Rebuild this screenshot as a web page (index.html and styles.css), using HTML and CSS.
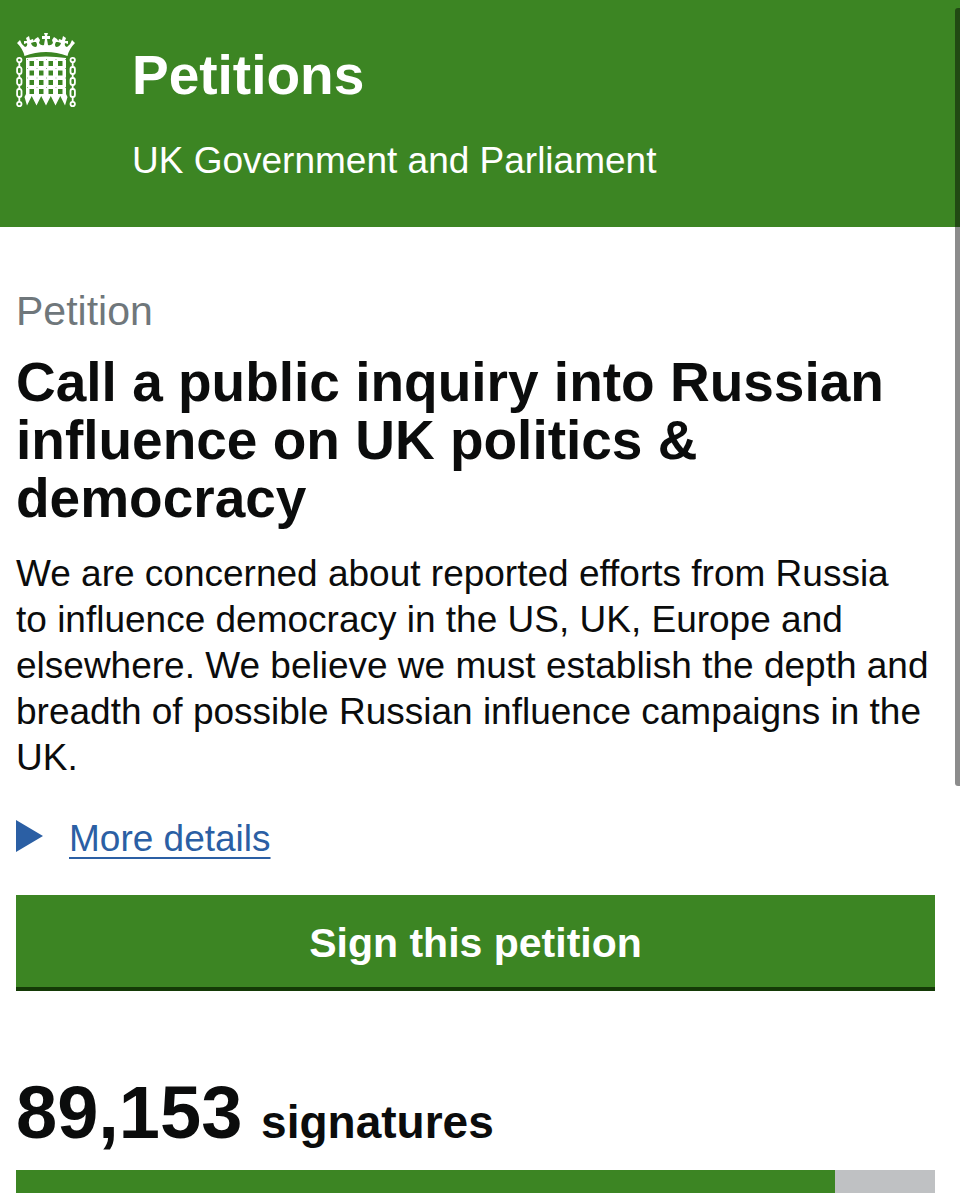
FILE: index.html
```html
<!DOCTYPE html>
<html lang="en">
<head>
  <meta charset="UTF-8">
  <meta name="viewport" content="width=device-width, initial-scale=1">
  <title>Petitions</title>
  <link rel="stylesheet" href="styles.css">
</head>
<body>
  <header class="header">
    <svg class="logo" viewBox="0 0 60 75" aria-hidden="true">
      <!-- crown -->
      <path fill="#fff" d="M8.5 23 Q7 16 1 10 L4 7 Q5 11 9 14 Q12 13 11 10 L8 11 L8 8 L11 8 L10 5 L13 3 L14 7 L17 6 L18 9 L15 10 Q16 14 20 14 Q22 12 20 9 L17 9 L19 6 L22 4 L24 7 L23 10 Q25 13 28 12 L29 6 L26 6 L26 3 L29 3 L28 0 L32 0 L31 3 L34 3 L34 6 L31 6 L32 12 Q35 13 37 10 L36 7 L38 4 L41 6 L43 9 L40 9 Q38 12 40 14 Q44 14 45 10 L42 9 L43 6 L46 7 L47 3 L50 5 L49 8 L52 8 L52 11 L49 10 Q48 13 51 14 Q55 11 56 7 L59 10 Q53 16 51.5 23 Q30 15 8.5 23 Z"/>
      <!-- gate -->
      <path fill="#fff" fill-rule="evenodd" d="M10 25 Q30 22 50 25 V61 L51.5 64 L49 72.5 L44.3 63 L39.5 72.5 L34.8 63 L30 72.5 L25.2 63 L20.5 72.5 L15.7 63 L11 72.5 L8.5 64 L10 61 Z M13.5 28 h4.5 v5 h-4.5z M23 28 h4.5 v5 h-4.5z M32.5 28 h4.5 v5 h-4.5z M42 28 h4.5 v5 h-4.5z M13.5 37.5 h4.5 v5 h-4.5z M23 37.5 h4.5 v5 h-4.5z M32.5 37.5 h4.5 v5 h-4.5z M42 37.5 h4.5 v5 h-4.5z M13.5 47 h4.5 v5 h-4.5z M23 47 h4.5 v5 h-4.5z M32.5 47 h4.5 v5 h-4.5z M42 47 h4.5 v5 h-4.5z M13.5 56 h4.5 v5 h-4.5z M23 56 h4.5 v5 h-4.5z M32.5 56 h4.5 v5 h-4.5z M42 56 h4.5 v5 h-4.5z"/>
      <!-- rivets -->
      <path stroke="#3c8523" stroke-opacity="0.6" stroke-width="1" stroke-dasharray="1 8.5" d="M11 35.5H51 M11 45H51 M11 54.5H51 M11 26.5H51"/>
      <!-- chains -->
      <g fill="none" stroke="#fff" stroke-width="1.8">
        <circle cx="3.3" cy="27" r="2.2"/>
        <rect x="1.1" y="34" width="4.4" height="7" rx="2"/>
        <rect x="1.1" y="45" width="4.4" height="7" rx="2"/>
        <rect x="1.1" y="56" width="4.4" height="8" rx="2"/>
        <circle cx="3.3" cy="71" r="2.2"/>
        <path d="M3.3 29v5 M3.3 41v4 M3.3 52v4 M3.3 64v5"/>
        <circle cx="56.7" cy="27" r="2.2"/>
        <rect x="54.5" y="34" width="4.4" height="7" rx="2"/>
        <rect x="54.5" y="45" width="4.4" height="7" rx="2"/>
        <rect x="54.5" y="56" width="4.4" height="8" rx="2"/>
        <circle cx="56.7" cy="71" r="2.2"/>
        <path d="M56.7 29v5 M56.7 41v4 M56.7 52v4 M56.7 64v5"/>
      </g>
    </svg>
    <div class="header-text">
      <div class="site-title">Petitions</div>
      <div class="site-subtitle">UK Government and Parliament</div>
    </div>
  </header>

  <main class="content">
    <p class="label">Petition</p>
    <h1 class="title">Call a public inquiry into Russian influence on UK politics &amp; democracy</h1>
    <p class="intro">We are concerned about reported efforts from Russia<br> to influence democracy in the US, UK, Europe and elsewhere. We believe we must establish the depth and breadth of possible Russian influence campaigns in the UK.</p>

    <details class="details">
      <summary><span>More details</span></summary>
    </details>

    <button class="sign-button" type="button">Sign this petition</button>

    <p class="count"><span class="count-number">89,153</span> signatures</p>
    <div class="progress">
      <div class="progress-bar" style="width: 89.1%"></div>
    </div>
  </main>

  <div class="scroll-thumb"></div>
</body>
</html>
```

FILE: styles.css
```css
body {
  margin: 0;
  position: relative;
  background: #fff;
  color: #0b0c0c;
  font-family: "Liberation Sans", Arial, sans-serif;
  font-size: 37px;
  line-height: 46px;
}
.header {
  display: flex;
  gap: 56px;
  padding: 33px 16px 43px;
  background: #3c8523;
  color: #fff;
}
.logo {
  width: 60px;
  height: 75px;
  flex: none;
}
.header-text {
  padding-top: 13px;
}
.site-title {
  margin-bottom: 34px;
  font-size: 55px;
  font-weight: bold;
  line-height: 58px;
}
.content {
  padding: 61px 25px 7px 16px;
}
.label {
  margin: 0 0 19px;
  color: #6f777b;
  font-size: 41px;
}
.title {
  margin: 0 0 24px;
  font-size: 55px;
  line-height: 58px;
}
.intro {
  margin: 0 0 35px;
}
.details {
  margin-bottom: 33px;
  color: #2b5fa4;
}
.details summary {
  display: flex;
  gap: 26px;
  list-style: none;
  cursor: pointer;
}
.details summary::before {
  content: "";
  margin-top: 4px;
  border-left: 27px solid #2b5fa4;
  border-top: 16px solid transparent;
  border-bottom: 16px solid transparent;
  align-self: flex-start;
}
.details span {
  text-decoration: underline;
  text-decoration-thickness: 2px;
  text-underline-offset: 6px;
  text-decoration-skip-ink: none;
}
.sign-button {
  display: block;
  width: 100%;
  height: 96px;
  margin-bottom: 82px;
  padding: 4px 0 0;
  border: none;
  border-bottom: 4px solid #143a06;
  background: #3c8523;
  color: #fff;
  font-family: inherit;
  font-size: 41px;
  font-weight: bold;
  cursor: pointer;
}
.count {
  margin: 0 0 8px;
  font-size: 46px;
  font-weight: bold;
  line-height: 80px;
}
.count-number {
  margin-right: 6px;
  font-size: 74px;
}
.progress {
  background: #bfc1c3;
}
.progress-bar {
  height: 23px;
  background: #3c8523;
}
.scroll-thumb {
  position: absolute;
  top: 8px;
  right: 0;
  width: 5px;
  height: 778px;
  border-radius: 3px 0 0 3px;
  background: rgba(0, 0, 0, 0.45);
}
```
